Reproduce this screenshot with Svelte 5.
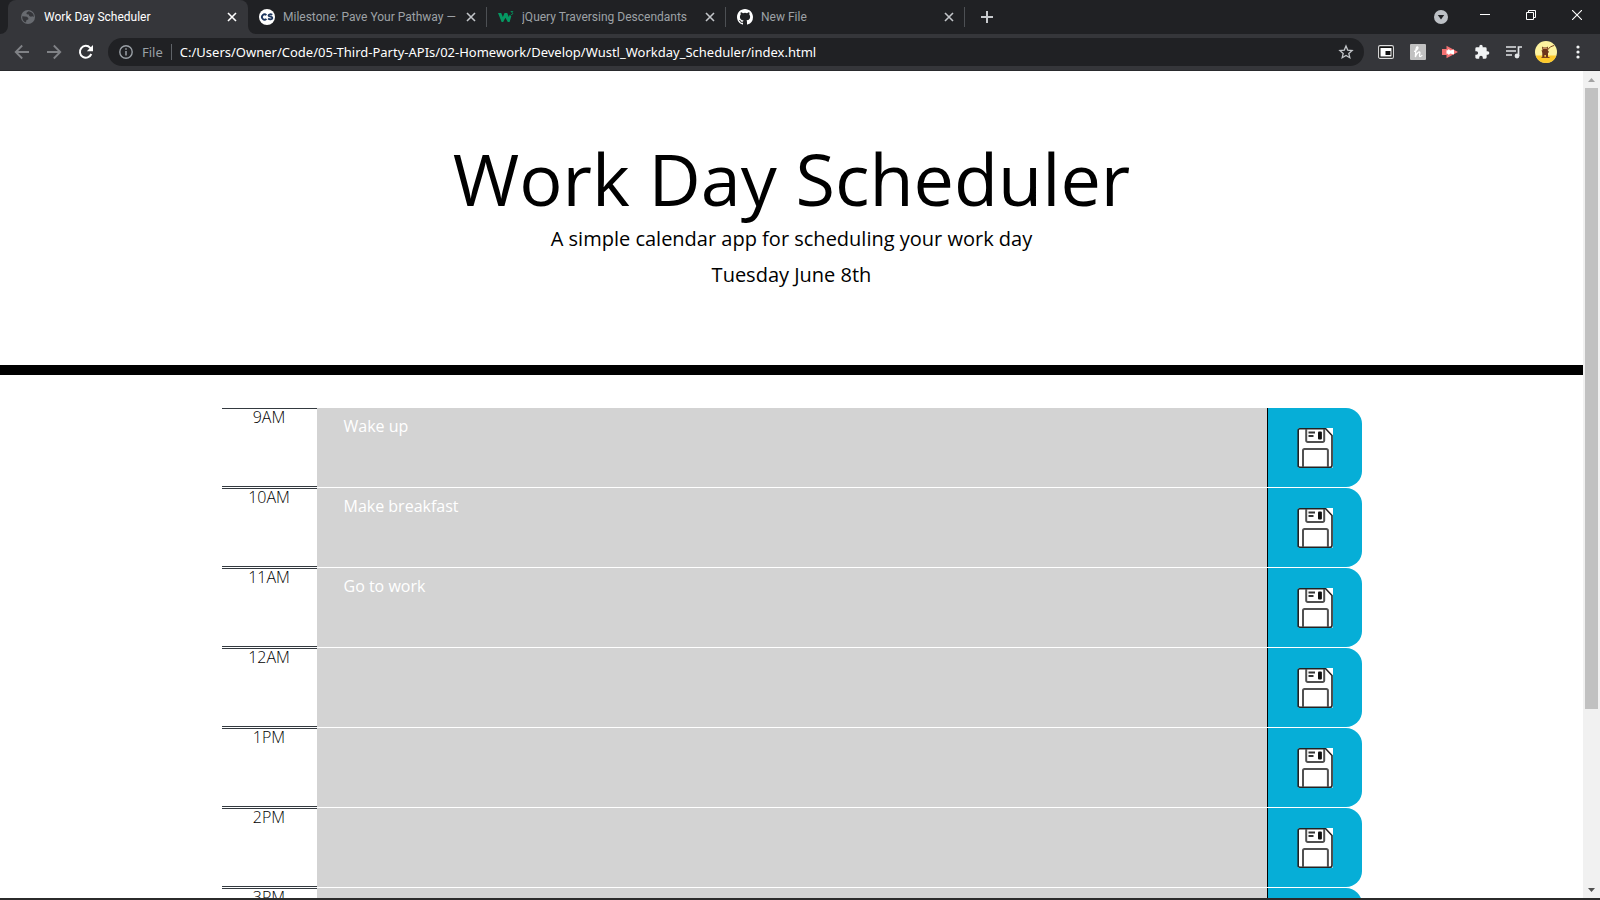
<script>
  const tabs = [
    { title: 'Work Day Scheduler', icon: 'globe', active: true },
    { title: 'Milestone: Pave Your Pathway —', icon: 'cs' },
    { title: 'jQuery Traversing Descendants', icon: 'w3' },
    { title: 'New File', icon: 'github' }
  ];
  let blocks = $state([
    { hour: '9AM', text: 'Wake up' },
    { hour: '10AM', text: 'Make breakfast' },
    { hour: '11AM', text: 'Go to work' },
    { hour: '12AM', text: '' },
    { hour: '1PM', text: '' },
    { hour: '2PM', text: '' },
    { hour: '3PM', text: '' }
  ]);
  let address = $state('C:/Users/Owner/Code/05-Third-Party-APIs/02-Homework/Develop/Wustl_Workday_Scheduler/index.html');
</script>

<div class="window">
  <header class="tabstrip">
    <nav class="tabs" aria-label="Tabs">
      {#each tabs as tab}
        <div class="tab" class:active={tab.active}>
          {#if tab.active}
            <svg class="flare left" width="8" height="8" viewBox="0 0 8 8" aria-hidden="true"><path d="M8 0v8H0a8 8 0 0 0 8-8z" fill="#35363a" /></svg>
            <svg class="flare right" width="8" height="8" viewBox="0 0 8 8" aria-hidden="true"><path d="M0 0v8h8a8 8 0 0 1-8-8z" fill="#35363a" /></svg>
          {/if}
          {#if tab.icon === 'globe'}
            <svg width="16" height="16" viewBox="0 0 16 16" aria-hidden="true">
              <circle cx="8" cy="8" r="7" fill="#686b70" />
              <path d="M2.200 7.200 5 7.600l2 .2 1.400 1.400-.2 1.300-1.700.5-.3 1.500-.8.900C3.500 12.400 2 10.400 2.200 7.200zM8.300 2.200l-2 1.700.6 1.300 1.900.3.500 1.500 1.600.7 1.500-.4 1.300.8C14.300 5.200 12 2.500 8.300 2.200z" fill="#35363a" />
            </svg>
          {:else if tab.icon === 'cs'}
            <svg width="16" height="16" viewBox="0 0 16 16" aria-hidden="true">
              <circle cx="8" cy="8" r="8" fill="#fff" />
              <path d="M7.400 6.200A2.600 2.600 0 1 0 7.400 9.900M13.300 5.800c-1.400-.9-3.800-.7-3.800.6 0 1.700 3.900.8 3.900 2.500 0 1.600-2.800 1.800-4.300.6" fill="none" stroke="#1c355e" stroke-width="1.800" />
            </svg>
          {:else if tab.icon === 'w3'}
            <svg width="16" height="16" viewBox="0 0 16 16" aria-hidden="true">
              <path d="M0 4h3.200l1.700 4L6.500 4h2.700l1.600 4 .9-2.300 1.600 1.500L11.600 13H9.800L7.400 8.700 5.200 13H3.600z" fill="#059862" />
              <path d="M12.700 2.500h2.100l-1 1.300c1.400.2 1.200 2-.9 1.700" fill="none" stroke="#059862" stroke-width=".9" />
            </svg>
          {:else}
            <svg width="16" height="16" viewBox="0 0 16 16" aria-hidden="true">
              <path fill="#fff" d="M8 0C3.580 0 0 3.580 0 8c0 3.540 2.290 6.530 5.470 7.590.4.070.55-.17.55-.38 0-.19-.010-.82-.010-1.490-2.010.37-2.530-.49-2.690-.94-.09-.23-.48-.94-.82-1.130-.28-.15-.68-.52-.010-.53.63-.010 1.080.58 1.230.82.72 1.210 1.870.87 2.330.66.070-.52.28-.87.510-1.070-1.780-.2-3.640-.89-3.640-3.950 0-.87.310-1.590.82-2.150-.080-.2-.36-1.020.080-2.120 0 0 .67-.21 2.200.82a7.600 7.600 0 0 1 4 0c1.530-1.040 2.200-.82 2.200-.82.44 1.100.16 1.920.080 2.120.51.56.82 1.270.82 2.150 0 3.070-1.870 3.750-3.650 3.950.29.25.54.73.54 1.480 0 1.070-.010 1.930-.010 2.200 0 .21.15.46.55.38A8.010 8.010 0 0 0 16 8c0-4.420-3.580-8-8-8z" />
            </svg>
          {/if}
          <span class="title">{tab.title}</span>
          <button class="close" aria-label="Close tab">
            <svg width="10" height="10" viewBox="0 0 10 10" aria-hidden="true"><path d="m1 1 8 8M9 1 1 9" stroke="currentColor" stroke-width="1.600" /></svg>
          </button>
        </div>
      {/each}
    </nav>
    <button class="newtab" aria-label="New tab">
      <svg width="12" height="12" viewBox="0 0 12 12" aria-hidden="true"><path d="M6 0v12M0 6h12" stroke="#c8cacd" stroke-width="2" /></svg>
    </button>
    <div class="winctl">
      <button aria-label="Search tabs">
        <svg width="14" height="14" viewBox="0 0 14 14" aria-hidden="true"><circle cx="7" cy="7" r="7" fill="#bdc1c6" /><path d="M3.800 5h6.400L7 9.500z" fill="#202124" /></svg>
      </button>
      <button aria-label="Minimize">
        <svg width="10" height="10" viewBox="0 0 10 10" aria-hidden="true"><path d="M0 4.500h10" stroke="#fff" /></svg>
      </button>
      <button aria-label="Restore">
        <svg width="10" height="10" viewBox="0 0 10 10" aria-hidden="true"><path d="M.5 2.500h7v7h-7zM2.500 2.500v-2h7v7h-2" fill="none" stroke="#fff" /></svg>
      </button>
      <button aria-label="Close window">
        <svg width="10" height="10" viewBox="0 0 10 10" aria-hidden="true"><path d="m0 0 10 10M10 0 0 10" stroke="#fff" stroke-width="1.100" /></svg>
      </button>
    </div>
  </header>

  <div class="toolbar">
    <div class="navbtns">
      <button aria-label="Back">
        <svg width="16" height="16" viewBox="0 0 16 16" aria-hidden="true"><path d="M15 8H2M8.200 1.500 1.700 8l6.500 6.500" fill="none" stroke="#808286" stroke-width="1.800" /></svg>
      </button>
      <button aria-label="Forward">
        <svg width="16" height="16" viewBox="0 0 16 16" aria-hidden="true"><path d="M1 8h13M7.800 1.500 14.300 8l-6.500 6.500" fill="none" stroke="#808286" stroke-width="1.800" /></svg>
      </button>
      <button aria-label="Reload">
        <svg width="16" height="16" viewBox="0 0 16 16" aria-hidden="true"><path d="M13.300 10A5.900 5.900 0 1 1 12.200 3.800L13.500 5.200" fill="none" stroke="#fff" stroke-width="2" /><path d="M15 1v6.200H8.800z" fill="#fff" /></svg>
      </button>
    </div>
    <div class="omnibox">
      <svg width="14" height="14" viewBox="0 0 14 14" aria-hidden="true"><circle cx="7" cy="7" r="6.200" fill="none" stroke="#9aa0a6" stroke-width="1.400" /><path d="M7 6v4.500M7 3.300v1.500" stroke="#9aa0a6" stroke-width="1.500" /></svg>
      <label for="address">File</label>
      <input id="address" bind:value={address} spellcheck="false" />
      <button aria-label="Bookmark this page">
        <svg width="16" height="16" viewBox="0 0 16 16" aria-hidden="true"><path d="m8 2 1.700 4.100 4.400.4-3.300 2.900 1 4.300L8 11.400l-3.800 2.300 1-4.300-3.300-2.900 4.400-.4z" fill="none" stroke="#c4c7ca" stroke-width="1.300" /></svg>
      </button>
    </div>
    <div class="extensions">
      <button aria-label="Picture in picture">
        <svg width="16" height="16" viewBox="0 0 16 16" aria-hidden="true"><rect x=".6" y="1.600" width="14.800" height="12.800" rx="1.500" fill="#111" stroke="#ddd" stroke-width="1.100" /><path d="M2.500 4h11v8.500h-11z" fill="#fff" /><path d="M7.500 7h5v4h-5z" fill="#111" /></svg>
      </button>
      <button aria-label="Honey">
        <svg width="16" height="16" viewBox="0 0 16 16" aria-hidden="true"><rect width="16" height="16" rx="1" fill="#c1c1c1" /><path d="M4 7.500C7.500 6.500 9 3 7.200 3S6 8 5.300 13c1-3.500 4.300-6.500 4.600-4.500.2 1.500-1.200 4 .3 4 .9 0 1.600-.8 2-1.500" fill="none" stroke="#fff" stroke-width="1.300" /></svg>
      </button>
      <button aria-label="Screen recorder">
        <svg width="16" height="16" viewBox="0 0 16 16" aria-hidden="true"><path d="M0 5h4.500V1.800L16 8 4.500 14.200V11H0z" fill="#f47272" /><path d="M4.500 6.200h1.300l1-1.200 1.400 1.500L12 5.500v5L8.200 9.500 6.800 11l-1-1.200H4.500z" fill="#fff" /></svg>
      </button>
      <button aria-label="Extensions">
        <svg width="16" height="16" viewBox="0 0 24 24" aria-hidden="true"><path d="M20.500 11H19V7a2 2 0 0 0-2-2h-4V3.500a2.500 2.500 0 0 0-5 0V5H4a2 2 0 0 0-2 2v3.800h1.500a2.700 2.700 0 0 1 0 5.400H2V20c0 1.100.9 2 2 2h3.800v-1.500a2.700 2.700 0 0 1 5.400 0V22H17a2 2 0 0 0 2-2v-4h1.500a2.500 2.500 0 0 0 0-5z" fill="#f1f3f4" /></svg>
      </button>
      <button aria-label="Media controls">
        <svg width="16" height="16" viewBox="0 0 16 16" aria-hidden="true"><path d="M0 3h10M0 7h10M0 11h6M12.500 12V3H16" fill="none" stroke="#e1e3e6" stroke-width="1.700" /><circle cx="11" cy="12" r="2.400" fill="#e1e3e6" /></svg>
      </button>
      <button class="profile" aria-label="Profile">
        <svg width="22" height="22" viewBox="0 0 22 22" aria-hidden="true"><circle cx="11" cy="11" r="11" fill="#fdf3a0" /><path d="M.6 14.500h20.800a11 11 0 0 1-20.800 0z" fill="#fdc92b" /><path d="M7 5.500 8.500 6.500h3L13 5.500l-.3 3.500L14 11l-1 1v4h-2.200v-2H9.500v2H7.300v-4L6.500 9l1 .5z" fill="#6b3419" /><path d="M8 7.500h4" stroke="#c98a5a" /><path d="M12.500 9c2-3 3.500-3.500 6.500-4.500M6.500 16.500h8" fill="none" stroke="#7d421f" /></svg>
      </button>
      <button class="more" aria-label="Menu">
        <svg width="4" height="14" viewBox="0 0 4 14" aria-hidden="true"><g fill="#f1f3f4"><circle cx="2" cy="2" r="1.600" /><circle cx="2" cy="7" r="1.600" /><circle cx="2" cy="12" r="1.600" /></g></svg>
      </button>
    </div>
  </div>

  <div class="viewport">
    <main class="page">
      <div class="jumbotron">
        <h1>Work Day Scheduler</h1>
        <p>A simple calendar app for scheduling your work day</p>
        <p>Tuesday June 8th</p>
      </div>
      <div class="container">
        {#each blocks as block, i}
          <div class="row">
            <label class="hour" for="block-{i}">{block.hour}</label>
            <textarea id="block-{i}" bind:value={block.text} spellcheck="false"></textarea>
            <button class="save" aria-label="Save {block.hour}">
              <svg width="36" height="40" viewBox="0 0 36 40" aria-hidden="true">
                <path d="M2.500 0H36v38.500a1.500 1.500 0 0 1-1.500 1.500h-32A1.500 1.500 0 0 1 1 38.500V1.500A1.500 1.500 0 0 1 2.500 0z" fill="#fff" />
                <path d="M2.700.8h26L35 7.500v29.700a2 2 0 0 1-2 2H2.700a1.500 1.500 0 0 1-1.500-1.500V2.300A1.500 1.500 0 0 1 2.700.8z" fill="#fff" stroke="#222" stroke-width="1.600" />
                <path d="M9.200 1v11.500a1.500 1.500 0 0 0 1.500 1.500h15a1.500 1.500 0 0 0 1.500-1.500V1M6 39V22.500A1.500 1.500 0 0 1 7.500 21h21.900a1.500 1.500 0 0 1 1.500 1.500V39" fill="none" stroke="#505050" stroke-width="2" />
                <path d="M11.500 4.500h6.500M11.500 8h5" stroke="#333" stroke-width="1.800" />
                <rect x="21" y="3.500" width="3.900" height="8" rx="1" fill="#111" />
              </svg>
            </button>
          </div>
        {/each}
      </div>
    </main>
    <div class="scrollbar" aria-hidden="true">
      <svg width="17" height="17" viewBox="0 0 17 17"><path d="M5 11h7L8.500 7z" fill="#a3a3a3" /></svg>
      <div class="track"><div class="thumb"></div></div>
      <svg width="17" height="17" viewBox="0 0 17 17"><path d="M5 7h7l-3.500 4z" fill="#505050" /></svg>
    </div>
  </div>
  <div class="taskbar"></div>
</div>

<style>
  :global(body) { margin: 0; }
  * { box-sizing: border-box; }
  button { border: 0; padding: 0; background: none; display: flex; align-items: center; justify-content: center; }
  svg { flex: none; display: block; }

  .window { height: 100vh; display: flex; flex-direction: column; overflow: hidden; background: #fff; }

  .tabstrip { flex: none; height: 34px; display: flex; background: #202124; padding-left: 8px; font: 12px/16px Roboto, sans-serif; }
  .tabs { display: flex; }
  .tab { position: relative; width: 239px; padding: 0 10px 0 11px; display: flex; align-items: center; gap: 8px; color: #9da1a6; }
  .tab.active { width: 240px; padding-left: 12px; background: #35363a; border-radius: 8px 8px 0 0; color: #fff; }
  .tab:not(.active)::after { content: ""; position: absolute; right: 0; top: 7px; width: 1px; height: 20px; background: #4d5054; }
  .flare { position: absolute; bottom: 0; }
  .flare.left { left: -8px; }
  .flare.right { right: -8px; }
  .title { flex: 1; overflow: hidden; white-space: nowrap; }
  .close { width: 12px; height: 16px; color: #c2c5c9; }
  .active .close { color: #fff; }
  .newtab { width: 44px; }
  .winctl { margin-left: auto; display: flex; }
  .winctl button { width: 46px; height: 30px; }
  .winctl button:first-child { height: 34px; width: 42px; }

  .toolbar { flex: none; height: 37px; display: flex; align-items: center; background: #35363a; border-bottom: 1px solid #292a2d; }
  .navbtns { display: flex; gap: 16px; padding: 0 14px; }
  .navbtns button { width: 16px; }
  .omnibox { flex: 1; height: 28px; display: flex; align-items: center; padding: 0 10px 0 11px; border-radius: 14px; background: #202124; font: 13px/20px "Noto Sans", sans-serif; }
  .omnibox label { margin: 0 8px 0 9px; padding-right: 8px; border-right: 1px solid #5f6368; color: #9aa0a6; line-height: 16px; }
  .omnibox input { flex: 1; min-width: 0; border: 0; padding: 0; background: none; color: #fff; font: inherit; outline: 0; }
  .extensions { display: flex; align-items: center; gap: 16px; padding: 0 20px 0 14px; }
  .profile { margin: 0 3px 0 -3px; }

  .viewport { flex: 1; min-height: 0; display: flex; }
  .page { flex: 1; min-width: 0; overflow: hidden; color: #000; font: 16px/24px "Open Sans", sans-serif; }
  .jumbotron { padding: 64px 32px 69px; margin-bottom: 33px; border-bottom: 10px solid #000; text-align: center; }
  h1 { margin: 0 0 3px; font-size: 72px; line-height: 86px; font-weight: 400; }
  .jumbotron p { margin: 0 0 6px; font-size: 20px; line-height: 30px; }
  .container { max-width: 1140px; margin: 0 auto; }
  .row { display: grid; grid-template-columns: 1fr 10fr 1fr; height: 79px; margin-bottom: 1px; }
  .hour { border: solid #343a40; border-width: 1px 0; text-align: center; line-height: 17px; font-weight: 300; }
  textarea { min-width: 0; height: 100%; border: 0; padding: 6px 27px; background: #d3d3d3; color: #fff; font: inherit; resize: none; outline: 0; overflow: hidden; }
  .save { position: relative; background: #06aed7; border-radius: 0 16px 16px 0; border-left: 1px solid #000; }

  .scrollbar { flex: none; width: 17px; display: flex; flex-direction: column; background: #f1f1f1; }
  .track { flex: 1; padding: 0 2px; }
  .thumb { height: 78.3%; background: #c1c1c1; }
  .taskbar { flex: none; height: 2px; background: #2b2b2b; }
</style>
